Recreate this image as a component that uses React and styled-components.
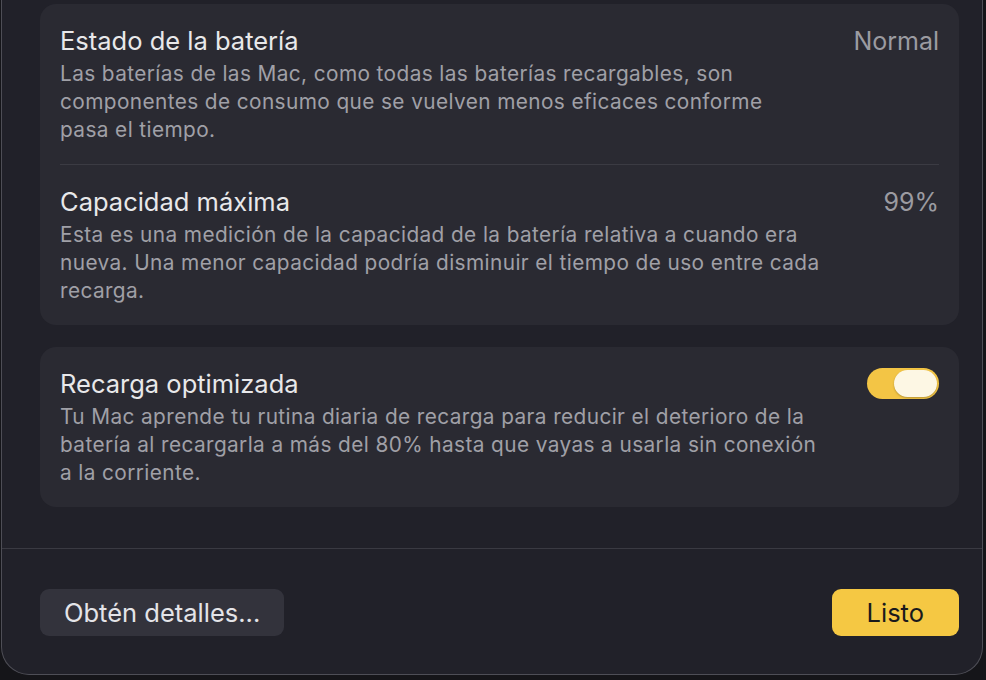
import React, { useState } from "react";
import styled, { createGlobalStyle } from "styled-components";

const Global = createGlobalStyle`
	html, body {
		margin: 0;
		padding: 0;
		background: #151519;
		font-family: Inter, "Noto Sans", "Liberation Sans", sans-serif;
		-webkit-font-smoothing: antialiased;
	}
`;

const Window = styled.div`
	width: 982px;
	height: 675px;
	margin-left: 1px;
	box-sizing: border-box;
	background: #212129;
	border: 1px solid #4e4e56;
	border-top: none;
	border-radius: 0 0 28px 28px;
	display: flex;
	flex-direction: column;
	padding-top: 4px;
`;

const Content = styled.div`
	display: flex;
	flex-direction: column;
	gap: 22px;
	padding: 0 23px 0 38px;
`;

const Card = styled.div`
	background: #2a2a32;
	border-radius: 16px;
	padding: 0 20px;
`;

const Row = styled.div`
	display: flex;
	align-items: flex-start;
	justify-content: space-between;
	padding: 22px 0 20px;
	border-top: ${({ $divided }) => ($divided ? "1px solid #3b3b43" : "none")};
`;

const Texts = styled.div`
	white-space: nowrap;
`;

const Title = styled.div`
	font-size: 25.5px;
	line-height: 30px;
	color: #e8e8ea;
`;

const Desc = styled.div`
	margin-top: 4px;
	font-size: 20.8px;
	line-height: 28px;
	color: #a0a0a7;
	letter-spacing: 0.4px;
`;

const Value = styled.div`
	font-size: 25px;
	line-height: 30px;
	color: #9b9ba1;
`;

const Toggle = styled.button`
	width: 72px;
	height: 31px;
	border: none;
	border-radius: 16px;
	background: ${({ $on }) => ($on ? "#f3c545" : "#45454d")};
	padding: 2px;
	display: flex;
	justify-content: ${({ $on }) => ($on ? "flex-end" : "flex-start")};
	cursor: pointer;
	flex-shrink: 0;
	margin-top: -1px;
`;

const Knob = styled.span`
	width: 43px;
	height: 27px;
	border-radius: 14px;
	background: #fdf7e4;
	box-shadow: 0 1px 2px rgba(0, 0, 0, 0.25);
`;

const Separator = styled.div`
	margin-top: 41px;
	height: 1px;
	background: #3a3a42;
`;

const Footer = styled.div`
	display: flex;
	justify-content: space-between;
	align-items: center;
	padding: 40px 23px 0 38px;
`;

const Button = styled.button`
	height: 47px;
	padding: 0 ${({ $primary }) => ($primary ? "35px" : "24px")};
	border: none;
	border-radius: 9px;
	font-family: inherit;
	font-size: 25.5px;
	background: ${({ $primary }) => ($primary ? "#f5c843" : "#33333c")};
	color: ${({ $primary }) => ($primary ? "#1a1a1c" : "#e4e4e8")};
	cursor: pointer;
`;

export default function App() {
	const [on, setOn] = useState(true);
	return (
		<>
			<Global />
			<Window>
				<Content>
					<Card>
						<Row>
							<Texts>
								<Title>Estado de la batería</Title>
								<Desc>
									Las baterías de las Mac, como todas las baterías recargables, son
									<br />
									componentes de consumo que se vuelven menos eficaces conforme
									<br />
									pasa el tiempo.
								</Desc>
							</Texts>
							<Value>Normal</Value>
						</Row>
						<Row $divided>
							<Texts>
								<Title>Capacidad máxima</Title>
								<Desc>
									Esta es una medición de la capacidad de la batería relativa a cuando era
									<br />
									nueva. Una menor capacidad podría disminuir el tiempo de uso entre cada
									<br />
									recarga.
								</Desc>
							</Texts>
							<Value>99%</Value>
						</Row>
					</Card>
					<Card>
						<Row>
							<Texts>
								<Title>Recarga optimizada</Title>
								<Desc>
									Tu Mac aprende tu rutina diaria de recarga para reducir el deterioro de la
									<br />
									batería al recargarla a más del 80% hasta que vayas a usarla sin conexión
									<br />
									a la corriente.
								</Desc>
							</Texts>
							<Toggle $on={on} onClick={() => setOn(!on)}>
								<Knob />
							</Toggle>
						</Row>
					</Card>
				</Content>
				<Separator />
				<Footer>
					<Button>Obtén detalles...</Button>
					<Button $primary>Listo</Button>
				</Footer>
			</Window>
		</>
	);
}
